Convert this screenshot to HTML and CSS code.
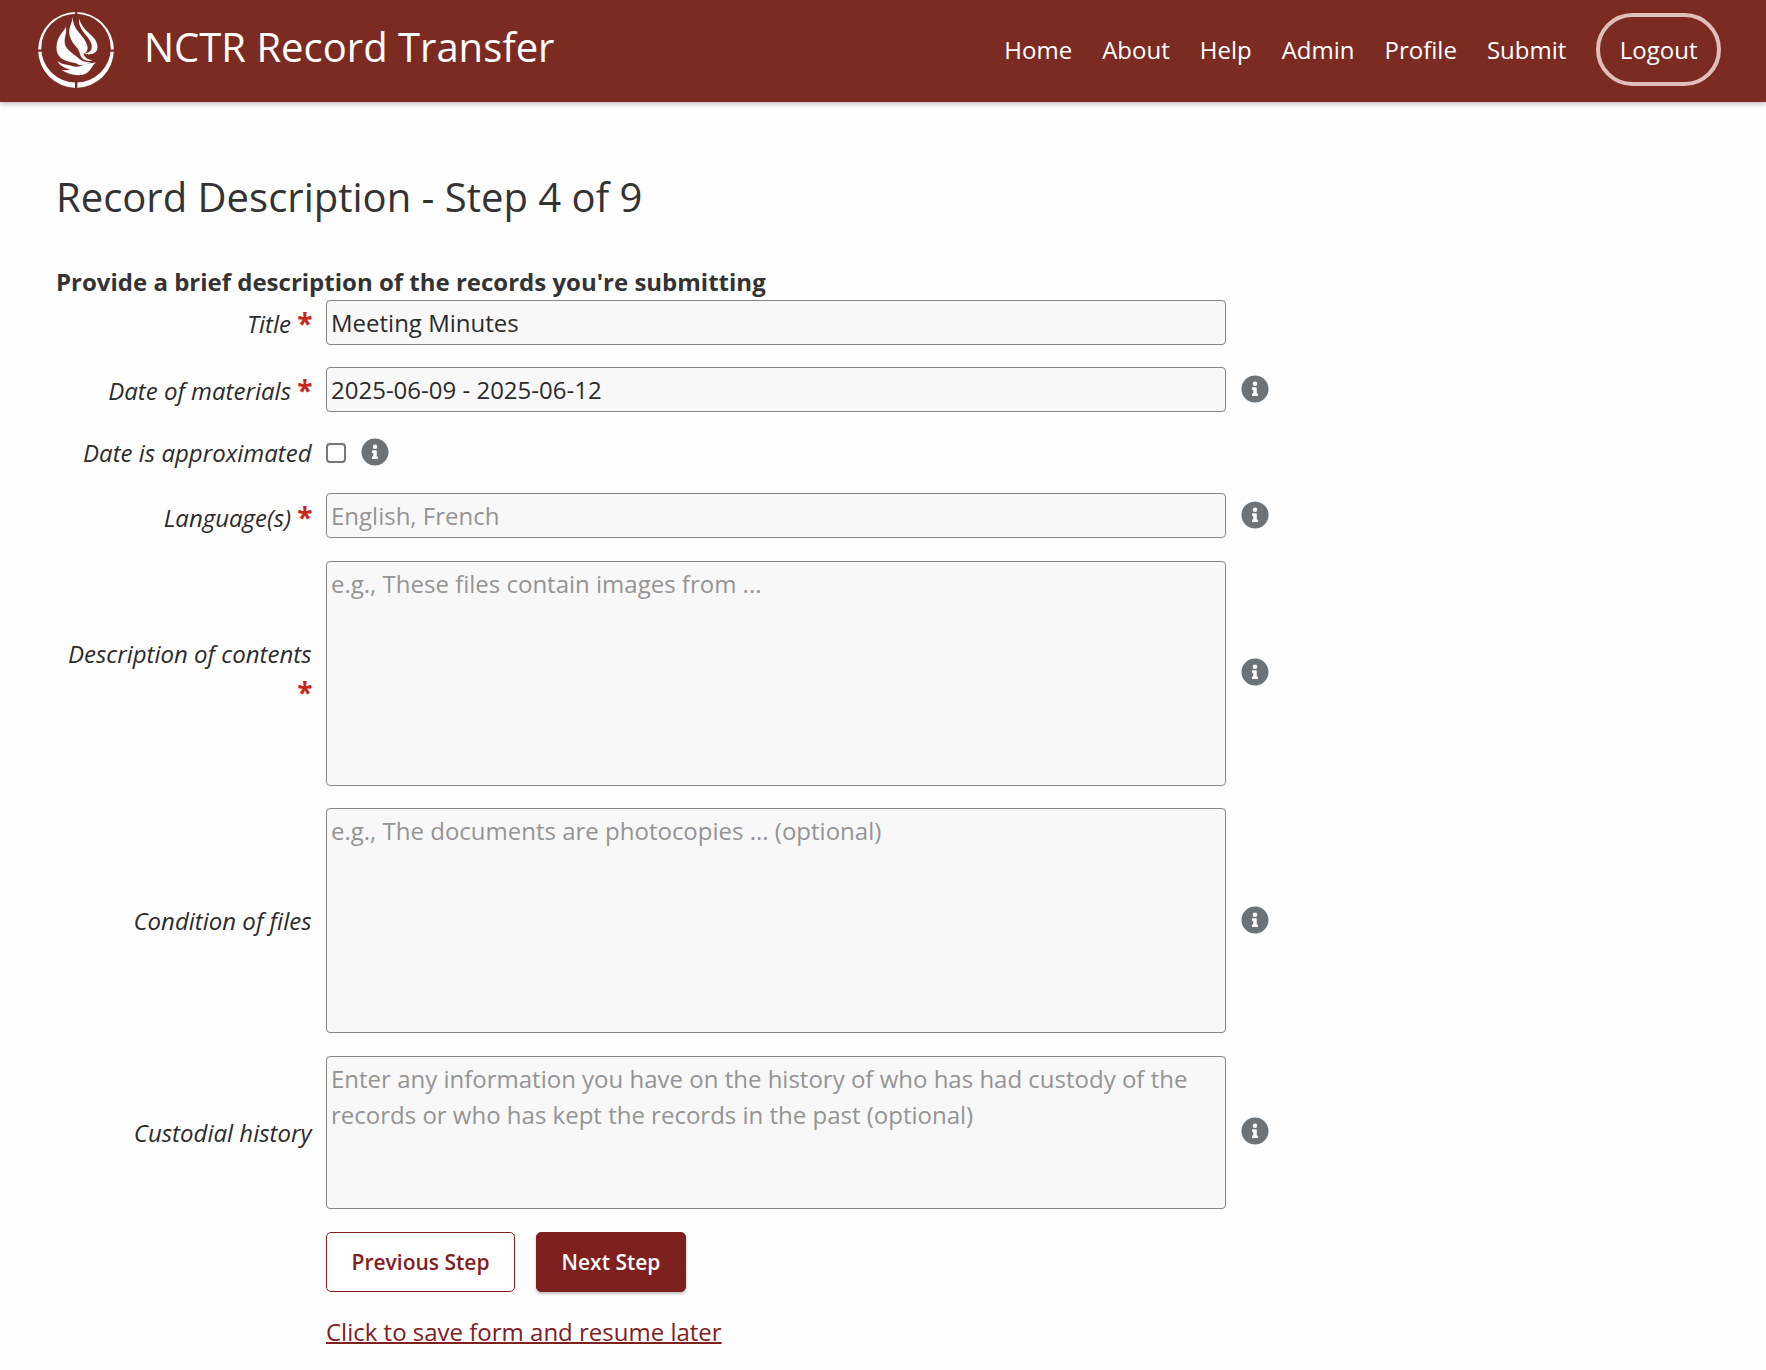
FILE: index.html
```html
<!DOCTYPE html>
<html lang="en">
<head>
<meta charset="utf-8">
<title>NCTR Record Transfer</title>
<link rel="stylesheet" href="styles.css">
</head>
<body>
<svg width="0" height="0" class="defs" aria-hidden="true">
  <symbol id="info" viewBox="0 0 512 512"><path d="M256 8C119 8 8 119 8 256s111 248 248 248 248-111 248-248S393 8 256 8zm0 110a42 42 0 1 1 0 84 42 42 0 0 1 0-84zm56 254c0 6.600-5.400 12-12 12h-88c-6.600 0-12-5.400-12-12v-24c0-6.600 5.400-12 12-12h12v-64h-12c-6.600 0-12-5.400-12-12v-24c0-6.600 5.400-12 12-12h64c6.600 0 12 5.400 12 12v100h12c6.600 0 12 5.400 12 12v24z"/></symbol>
</svg>
<header class="header">
  <a class="brand">
    <svg class="logo" viewBox="55 36 224 225" fill="#fff">
      <path fill-rule="evenodd" d="M167 36A112 112.500 0 1 1 167 261A112 112.500 0 1 1 167 36ZM167 41A103 102 0 1 0 167 245A103 102 0 1 0 167 41Z"/>
      <path class="gap" d="M164 30h7v20h-7zM164 238h7v28h-7zM50 147h20v7H50zM262 147h22v7h-22z"/>
      <path d="M157 50C156 68 147 78 147 96C147 116 162 132 172 145C179 154 178 166 186 173C194 181 207 182 216 179C203 178 191 170 189 159C198 157 203 148 201 138C198 123 188 111 177 98C165 84 158 72 157 50Z"/>
      <path d="M176 56C173 78 188 94 201 110C211 123 218 138 211 149C207 155 200 157 192 158C202 164 218 162 226 154C234 144 231 127 220 113C208 99 184 84 176 56Z"/>
      <path d="M137 78C137 88 116 102 111 126C106 151 112 168 132 178C149 186 164 184 176 193C186 193 200 191 212 184C196 187 184 182 172 171C160 159 138 149 134 130C131 110 141 99 137 78Z"/>
      <path d="M112 181C124 191 140 191 153 195C170 201 180 198 193 191C203 186 214 189 226 185C218 191 215 200 209 207C199 221 180 226 161 222C145 219 134 214 124 207C134 209 142 208 149 206C132 202 118 194 112 181Z"/>
    </svg>
    <span class="brand-name">NCTR Record Transfer</span>
  </a>
  <nav class="nav">
    <a>Home</a><a>About</a><a>Help</a><a>Admin</a><a>Profile</a><a>Submit</a><a class="logout">Logout</a>
  </nav>
</header>
<main class="main">
  <h1>Record Description - Step 4 of 9</h1>
  <p class="legend">Provide a brief description of the records you're submitting</p>
  <form class="form">
    <div class="row"><label>Title <b>*</b></label><input class="field" type="text" value="Meeting Minutes"></div>
    <div class="row"><label>Date of materials <b>*</b></label><input class="field" type="text" value="2025-06-09 - 2025-06-12"><svg class="info"><use href="#info"/></svg></div>
    <div class="row check"><label>Date is approximated</label><input class="box" type="checkbox"><svg class="info"><use href="#info"/></svg></div>
    <div class="row"><label>Language(s) <b>*</b></label><input class="field" type="text" placeholder="English, French"><svg class="info"><use href="#info"/></svg></div>
    <div class="row tall"><label>Description of contents <b>*</b></label><textarea class="field" placeholder="e.g., These files contain images from ..."></textarea><svg class="info"><use href="#info"/></svg></div>
    <div class="row tall"><label>Condition of files</label><textarea class="field" placeholder="e.g., The documents are photocopies ... (optional)"></textarea><svg class="info"><use href="#info"/></svg></div>
    <div class="row medium"><label>Custodial history</label><textarea class="field" placeholder="Enter any information you have on the history of who has had custody of the records or who has kept the records in the past (optional)"></textarea><svg class="info"><use href="#info"/></svg></div>
    <div class="actions">
      <button type="button" class="btn previous">Previous Step</button>
      <button type="button" class="btn next">Next Step</button>
    </div>
    <a class="save">Click to save form and resume later</a>
  </form>
</main>
</body>
</html>
```
FILE: styles.css
```css
* { box-sizing: border-box; }
body {
  margin: 0;
  background: #fefefe;
  color: #333;
  font: 24px/36px "Open Sans", sans-serif;
}
.defs { display: block; }
.header {
  display: flex;
  align-items: center;
  justify-content: space-between;
  height: 102px;
  padding: 0 45px 3px 38px;
  background: #7c2b22;
  color: #fff;
  box-shadow: 0 2px 5px rgba(0, 0, 0, .25);
}
.brand { display: flex; align-items: center; gap: 31px; }
.logo { width: 76px; height: 76px; margin-right: -1px; }
.gap { fill: #7c2b22; }
.brand-name { font-size: 40px; line-height: 54px; padding-bottom: 6px; }
.nav { display: flex; align-items: center; gap: 30px; }
.logout {
  height: 73px;
  padding: 14.500px 19.500px;
  border: 4px solid #dfbfba;
  border-radius: 37px;
}
.main { padding: 67px 56px 0; }
h1 { margin: 0; font-size: 40px; line-height: 56px; font-weight: 400; }
.legend { margin: 39px 0 0; font-weight: 700; line-height: 36px; }
.form { display: flex; flex-direction: column; gap: 22.500px; }
.row { display: flex; align-items: center; height: 44.800px; }
.row.check { height: 36.400px; }
.row.tall { height: 224.900px; }
.row.medium { height: 153px; }
label {
  width: 255.500px;
  margin-right: 14.500px;
  padding-top: 2px;
  text-align: right;
  font-style: italic;
  color: #2b2b2b;
}
.check label, .tall label { padding-top: 0; }
label b {
  display: inline-block;
  margin-right: -1px;
  font-size: 28px;
  line-height: 36px;
  font-style: normal;
  vertical-align: -1.500px;
  color: #c5281c;
}
.tall label b { padding-top: 2px; }
.field {
  width: 900px;
  height: 100%;
  margin: 0;
  padding: 4px;
  border: 1.500px solid #868686;
  border-radius: 4px;
  background: #f8f8f8;
  color: #2b2b2b;
  font: inherit;
  resize: none;
  outline: 0;
}
.field::placeholder { color: #949494; opacity: 1; }
.box {
  appearance: none;
  width: 20px;
  height: 20px;
  margin: 1px 0 0;
  border: 2px solid #777;
  border-radius: 4px;
  background: #fff;
}
.info { width: 28px; height: 28px; margin: 0 0 2px 15px; fill: #6c7378; }
.actions { display: flex; gap: 21px; margin-left: 270px; padding-top: 1px; margin-bottom: -1px; }
.btn {
  height: 60px;
  border: 1.500px solid #7e201e;
  border-radius: 5px;
  font: 600 21px/30px "Open Sans", sans-serif;
}
.previous { width: 189px; background: #fff; color: #7e201e; }
.next { width: 150px; background: #7e201e; color: #fff; box-shadow: 0 2px 3px rgba(0, 0, 0, .25); }
.save {
  align-self: flex-start;
  margin-left: 270px;
  color: #7e201e;
  text-decoration: underline;
  text-decoration-thickness: 2px;
  text-decoration-skip-ink: none;
}
```
